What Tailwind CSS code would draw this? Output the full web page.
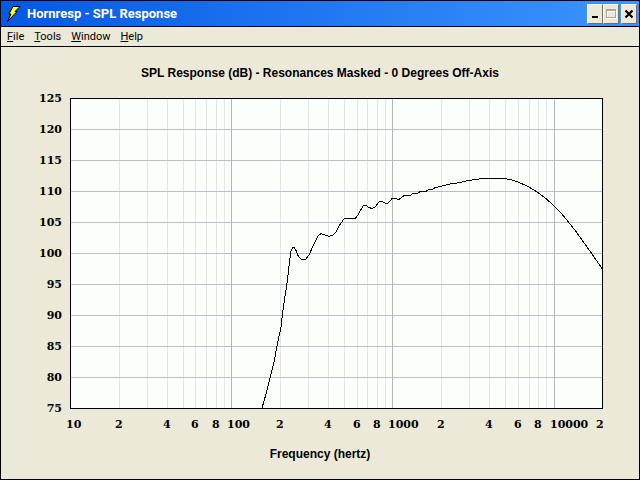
<!DOCTYPE html>
<html lang="en">
<head>
<meta charset="utf-8">
<title>Hornresp - SPL Response</title>
<script src="https://cdn.jsdelivr.net/npm/@tailwindcss/browser@4"></script>
</head>
<body class="bg-[#ece9d8] text-black">
<div class="flex min-h-screen flex-col border border-black">
  <header class="flex h-[26px] items-center justify-between border-b border-black bg-linear-to-r from-[#0458e4] to-[#3c94fc] pl-1 pr-0.5">
    <div class="flex items-center gap-1.5">
      <svg class="h-4 w-4" viewBox="0 0 16 16" aria-hidden="true">
        <path d="M8 0.5H15L10 5.5H12L2.5 15.5L6 8H4Z" fill="#ffff20" stroke="#000" stroke-width="1"/>
      </svg>
      <h1 class="font-['Roboto',sans-serif] text-[13px] leading-4 font-bold text-white">Hornresp - SPL Response</h1>
    </div>
    <div class="flex">
      <button type="button" aria-label="Minimize" class="flex h-5 w-4 items-center justify-center border border-t-white border-r-[#716f64] border-b-[#716f64] border-l-white bg-[#ece9d8]">
        <svg class="h-3 w-3" viewBox="0 0 12 12"><path d="M3 8h6v2H3z" fill="#000"/></svg>
      </button>
      <button type="button" aria-label="Maximize" disabled class="flex h-5 w-4 items-center justify-center border border-t-white border-r-[#716f64] border-b-[#716f64] border-l-white bg-[#ece9d8]">
        <svg class="h-3 w-3" viewBox="0 0 12 12" fill="none" shape-rendering="crispEdges"><path d="M2.5 2.5h9v8h-9zM2 3.5h10" stroke="#fff"/><path d="M1.5 1.5h9v8h-9zM1 2.5h10" stroke="#aca899"/></svg>
      </button>
      <button type="button" aria-label="Close" class="ml-0.5 flex h-5 w-4 items-center justify-center border border-t-white border-r-[#716f64] border-b-[#716f64] border-l-white bg-[#ece9d8]">
        <svg class="h-3 w-3" viewBox="0 0 12 12"><path d="M2.5 2.5L9.5 9.5M9.5 2.5L2.5 9.5" stroke="#000" stroke-width="2.2"/></svg>
      </button>
    </div>
  </header>
  <nav class="flex h-5 items-center gap-2.5 border-b border-black px-1.5 font-['Roboto',sans-serif] text-[11px] leading-4">
    <button type="button"><span class="underline">F</span>ile</button>
    <button type="button"><span class="underline">T</span>ools</button>
    <button type="button"><span class="underline">W</span>indow</button>
    <button type="button"><span class="underline">H</span>elp</button>
  </nav>
  <main class="flex flex-col items-center pt-[18px] font-['Liberation_Sans',sans-serif] text-[12px] leading-4 font-bold">
    <h2>SPL Response (dB) - Resonances Masked - 0 Degrees Off-Axis</h2>
    <svg class="mt-2 w-full font-['DejaVu_Serif',serif] text-[11px]" viewBox="1 89 638 357" role="img" aria-label="SPL response in dB against frequency in hertz">
      <rect x="70" y="98" width="533" height="311" fill="#fcfefc"/>
      <g id="grid" shape-rendering="crispEdges" stroke-width="1"></g>
      <polyline fill="none" stroke="#000" stroke-width="1" shape-rendering="crispEdges" points="262,408 266,394 270,378 274,362 277,346 281,327 283,310 287,283 290,258 291,251 293,247.5 294,247.5 296,250.5 298,255.5 301,259 303,260 306,259 309,255 313,246 318,236 321,233.5 325,235 329,236.5 333,235 336,232 340,224.5 344,219 347,218.5 355,218.5 358,215 363,206 366,205.5 369,207.5 372,208.5 375,207 379,202 382,201.5 386,203.5 388,203 392,198.7 395,198.5 399,199.5 404,195.7 410,195.5 413,193.5 417,193.5 420,191.7 426,191.5 429,189.2 433,189.2 435,187.7 440,186.5 450,184 460,182.5 468,180.5 476,179.5 483,178.5 506,178.7 512,180 518,182 528,186.5 538,192.5 546,198.5 553,205 561,213 568,221.5 576,231.5 583,241.5 591,252.5 602,268.5"/>
      <rect x="70.5" y="98.5" width="532" height="310" fill="none" stroke="#000" shape-rendering="crispEdges"/>
      <g id="levels" text-anchor="end"></g>
      <g id="frequencies"></g>
    </svg>
    <p>Frequency (hertz)</p>
  </main>
</div>
<script>
  const add = (id, name, attrs, text) => {
    const el = document.createElementNS('http://www.w3.org/2000/svg', name);
    for (const key in attrs) el.setAttribute(key, attrs[key]);
    if (text !== undefined) el.textContent = text;
    document.getElementById(id).appendChild(el);
  };
  const xOf = f => Math.round(70 + 161.2 * Math.log10(f / 10));
  const vertical = (f, color) => add('grid', 'line', { x1: xOf(f) + 0.5, x2: xOf(f) + 0.5, y1: 98, y2: 408, stroke: color });

  for (let decade = 10; decade <= 10000; decade *= 10)
    for (let n = 2; n <= 9 && n * decade < 20000; n++) vertical(n * decade, '#e4e5e8');
  for (let db = 75; db <= 125; db += 5) {
    const y = 408 - (db - 75) * 6.2;
    add('grid', 'line', { x1: 70, x2: 602, y1: y + 0.5, y2: y + 0.5, stroke: '#bcbec2' });
    add('levels', 'text', { x: 62, y: y + 4 }, db);
  }
  vertical(100, '#b4b6b8');
  vertical(1000, '#b4b6b8');
  vertical(10000, '#b4b6b8');

  for (let decade = 10; decade <= 10000; decade *= 10) {
    add('frequencies', 'text', { x: xOf(decade) - 4, y: 428 }, decade);
    for (const n of [2, 4, 6, 8])
      if (n * decade <= 20000) add('frequencies', 'text', { x: xOf(n * decade) - (n * decade === 20000 ? 6 : 4), y: 428 }, n);
  }
</script>
</body>
</html>
